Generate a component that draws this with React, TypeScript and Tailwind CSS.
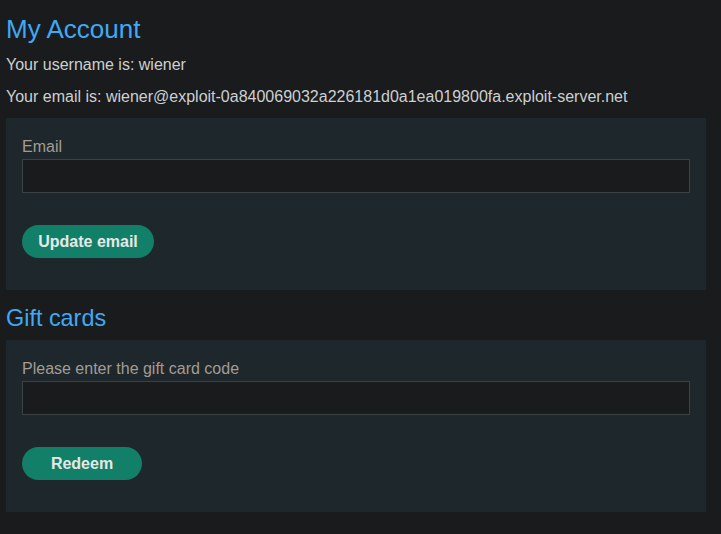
import React from "react";

export default function App() {
  return (
    <div className="min-h-[534px] w-full bg-[#1a1b1d] px-[6px] pt-[14px] pb-[22px]" style={{ fontFamily: '"Liberation Sans", Arial, sans-serif' }}>
      <h1 className="text-[26px] leading-[30px] text-[#3fa9f5]">My Account</h1>
      <p className="mt-[12px] text-[16px] leading-[18px] text-[#cbd0d1]">Your username is: wiener</p>
      <p className="mt-[14px] text-[16px] leading-[18px] text-[#cbd0d1]">
        Your email is: wiener@exploit-0a840069032a226181d0a1ea019800fa.exploit-server.net
      </p>
      <div className="mt-[12px] h-[172px] w-[700px] bg-[#1e272b] px-[16px] pt-[20px]">
        <label className="block text-[16px] leading-[18px] text-[#a39c93]">Email</label>
        <input className="mt-[3px] block h-[34px] w-[668px] border border-[#3c4144] bg-[#1a1b1d] outline-none" />
        <button className="mt-[32px] h-[33px] w-[132px] rounded-full bg-[#128068] text-[16px] font-bold text-[#e6e8e6]">Update email</button>
      </div>
      <h2 className="mt-[14px] text-[23.4px] leading-[28px] text-[#3fa9f5]">Gift cards</h2>
      <div className="mt-[8px] h-[172px] w-[700px] bg-[#1e272b] px-[16px] pt-[20px]">
        <label className="block text-[16px] leading-[18px] text-[#a39c93]">Please enter the gift card code</label>
        <input className="mt-[3px] block h-[34px] w-[668px] border border-[#3c4144] bg-[#1a1b1d] outline-none" />
        <button className="mt-[32px] h-[33px] w-[120px] rounded-full bg-[#128068] text-[16px] font-bold text-[#e6e8e6]">Redeem</button>
      </div>
    </div>
  );
}
